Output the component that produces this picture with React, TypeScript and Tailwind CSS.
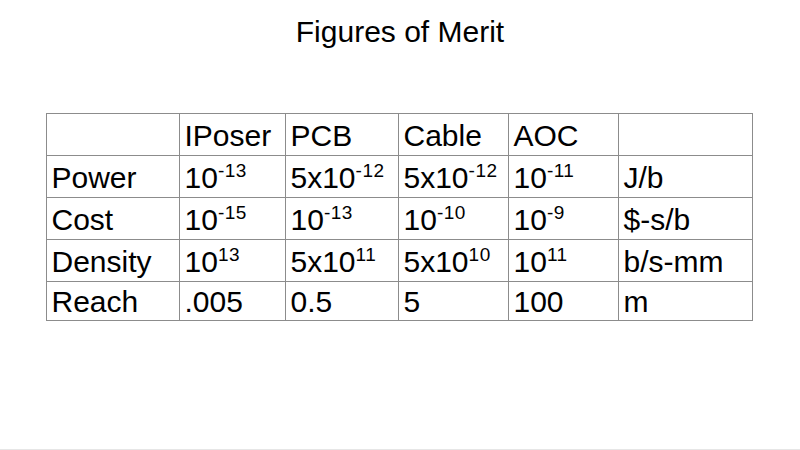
const cols = ['w-[133px]', 'w-[106px]', 'w-[113px]', 'w-[110px]', 'w-[110px]', 'w-[134px]'];

type Cell = string | [string, string];

const rows: Cell[][] = [
  ['', 'IPoser', 'PCB', 'Cable', 'AOC', ''],
  ['Power', ['10', '-13'], ['5x10', '-12'], ['5x10', '-12'], ['10', '-11'], 'J/b'],
  ['Cost', ['10', '-15'], ['10', '-13'], ['10', '-10'], ['10', '-9'], '$-s/b'],
  ['Density', ['10', '13'], ['5x10', '11'], ['5x10', '10'], ['10', '11'], 'b/s-mm'],
  ['Reach', '.005', '0.5', '5', '100', 'm'],
];

function Value({ v }: { v: Cell }) {
  if (typeof v === 'string') return <>{v}</>;
  return (
    <>
      {v[0]}
      <span className="relative -top-[11px] text-[19px] tracking-[0.5px]">{v[1]}</span>
    </>
  );
}

export default function App() {
  return (
    <div
      className="w-[800px] h-[450px] bg-white flex flex-col items-center text-black border-b border-[#e6e6e6]"
      style={{ fontFamily: '"Liberation Sans", Arial, sans-serif' }}
    >
      <h1 className="mt-[14px] text-[30px] leading-[36px]">Figures of Merit</h1>
      <table className="mt-[63px] ml-[-2px] border-collapse table-fixed">
        <tbody>
          {rows.map((r, i) => (
            <tr key={i} className={i === 4 ? 'h-[39px]' : 'h-[42px]'}>
              {r.map((c, j) => (
                <td
                  key={j}
                  className={`${cols[j]} border border-[#8c8c8c] px-[5px] pt-[2px] text-[30px] leading-none whitespace-nowrap align-middle`}
                >
                  <Value v={c} />
                </td>
              ))}
            </tr>
          ))}
        </tbody>
      </table>
    </div>
  );
}
